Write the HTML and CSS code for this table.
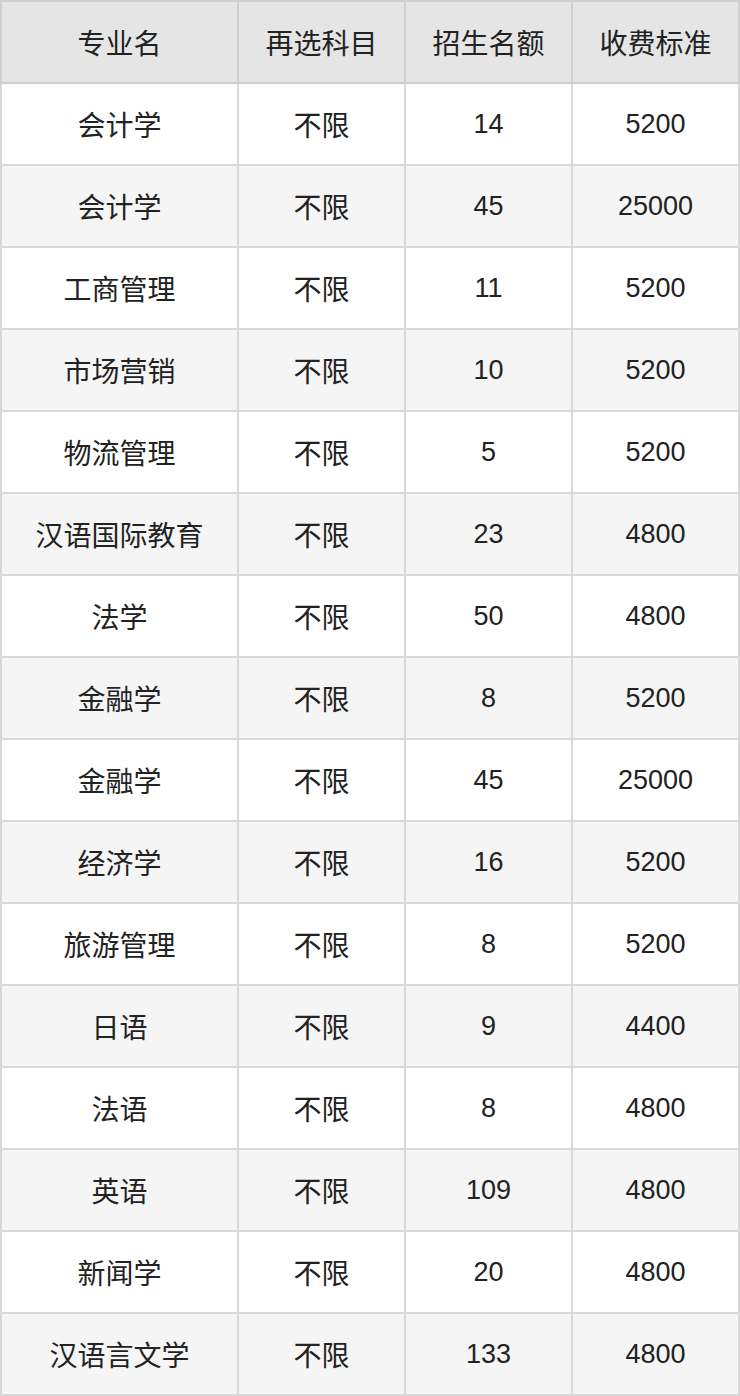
FILE: index.html
```html
<!DOCTYPE html>
<html lang="zh">
<head>
<meta charset="utf-8">
<link rel="stylesheet" href="styles.css">
</head>
<body>
<table class="tbl">
<thead>
<tr><th>专业名</th><th>再选科目</th><th>招生名额</th><th>收费标准</th></tr>
</thead>
<tbody>
<tr><td>会计学</td><td>不限</td><td class="num">14</td><td class="num">5200</td></tr>
<tr><td>会计学</td><td>不限</td><td class="num">45</td><td class="num">25000</td></tr>
<tr><td>工商管理</td><td>不限</td><td class="num">11</td><td class="num">5200</td></tr>
<tr><td>市场营销</td><td>不限</td><td class="num">10</td><td class="num">5200</td></tr>
<tr><td>物流管理</td><td>不限</td><td class="num">5</td><td class="num">5200</td></tr>
<tr><td>汉语国际教育</td><td>不限</td><td class="num">23</td><td class="num">4800</td></tr>
<tr><td>法学</td><td>不限</td><td class="num">50</td><td class="num">4800</td></tr>
<tr><td>金融学</td><td>不限</td><td class="num">8</td><td class="num">5200</td></tr>
<tr><td>金融学</td><td>不限</td><td class="num">45</td><td class="num">25000</td></tr>
<tr><td>经济学</td><td>不限</td><td class="num">16</td><td class="num">5200</td></tr>
<tr><td>旅游管理</td><td>不限</td><td class="num">8</td><td class="num">5200</td></tr>
<tr><td>日语</td><td>不限</td><td class="num">9</td><td class="num">4400</td></tr>
<tr><td>法语</td><td>不限</td><td class="num">8</td><td class="num">4800</td></tr>
<tr><td>英语</td><td>不限</td><td class="num">109</td><td class="num">4800</td></tr>
<tr><td>新闻学</td><td>不限</td><td class="num">20</td><td class="num">4800</td></tr>
<tr><td>汉语言文学</td><td>不限</td><td class="num">133</td><td class="num">4800</td></tr>
</tbody>
</table>
</body>
</html>
```
FILE: styles.css
```css
html, body {
  margin: 0;
  padding: 0;
  background: #ffffff;
}
.tbl {
  width: 740px;
  border-collapse: collapse;
  table-layout: fixed;
  font-family: "Liberation Sans", "Noto Sans CJK SC", sans-serif;
  font-size: 28px;
  color: #222222;
}
.tbl th, .tbl td {
  border: 2px solid #d9d9d9;
  height: 82px;
  padding: 0;
  text-align: center;
  vertical-align: middle;
  font-weight: normal;
  box-sizing: border-box;
}
.tbl th {
  background: #e5e5e5;
  border-color: #d0d0d0;
}
.tbl .num {
  font-size: 27px;
}
.tbl th:first-child, .tbl td:first-child {
  width: 237px;
}
.tbl tbody tr:nth-child(even) td {
  background: #f5f5f5;
}
```
